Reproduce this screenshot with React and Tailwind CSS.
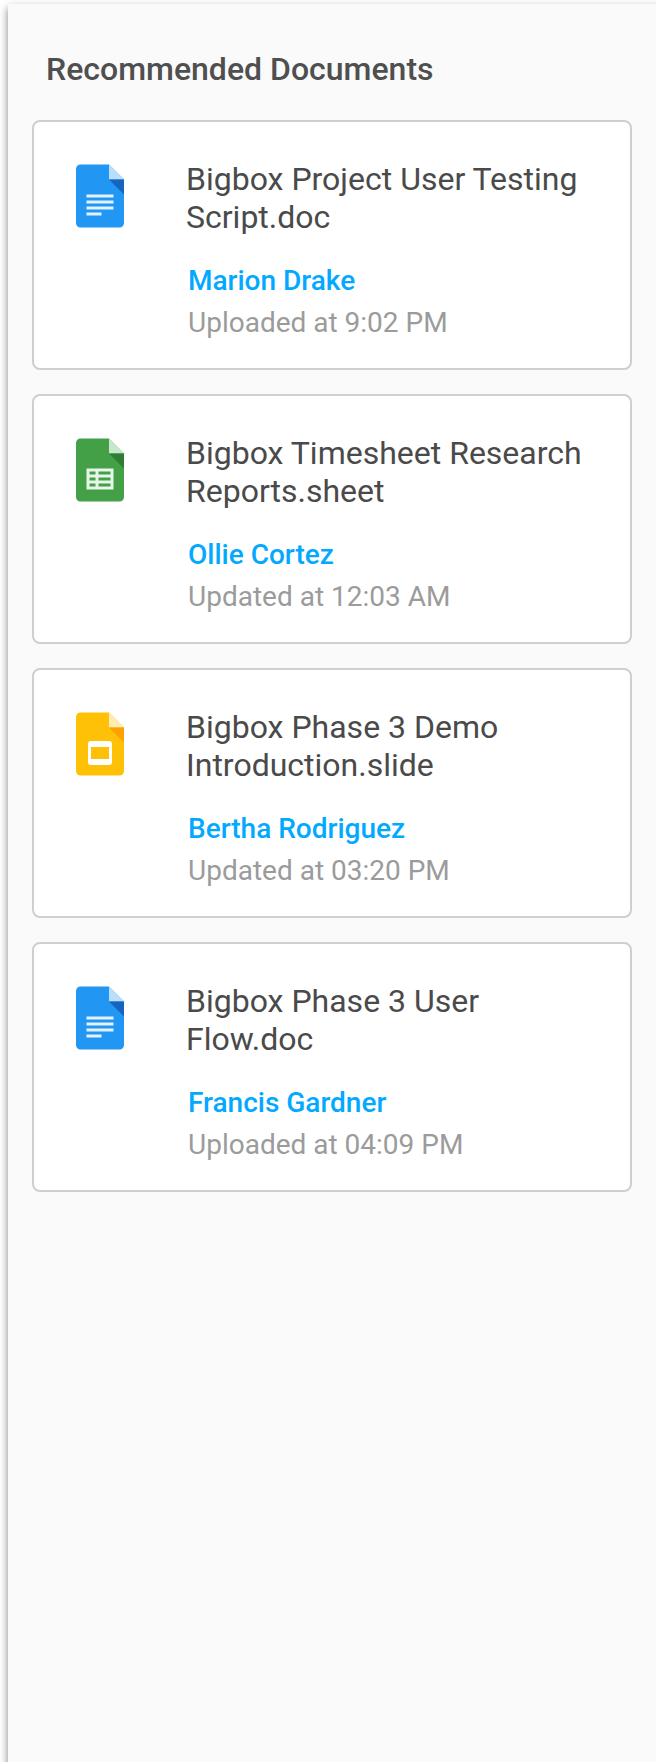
const PAGE = "M37 45H11c-1.657 0-3-1.343-3-3V6c0-1.657 1.343-3 3-3h19l10 10v29c0 1.657-1.343 3-3 3z";

const KINDS = {
  doc: { page: "#2196f3", fold: "#bbdefb", shade: "#1565c0" },
  sheet: { page: "#43a047", fold: "#c8e6c9", shade: "#2e7d32" },
  slide: { page: "#ffc107", fold: "#ffecb3", shade: "#ffa000" },
};

function FileIcon({ kind }) {
  const c = KINDS[kind];
  return (
    <svg viewBox="0 0 48 48" className="size-[72px] shrink-0" aria-hidden="true">
      <path fill={c.page} d={PAGE} />
      <path fill={c.fold} d="M40 13H30V3z" />
      <path fill={c.shade} d="M30 13l10 10V13z" />
      {kind === "doc" && (
        <path fill="#e3f2fd" d="M15 23h18v2H15zM15 27h18v2H15zM15 31h18v2H15zM15 35h10v2H15z" />
      )}
      {kind === "sheet" && (
        <path
          fill="#e8f5e9"
          fillRule="evenodd"
          d="M15 23h18v14H15zM17 25h4v2h-4zM17 29h4v2h-4zM17 33h4v2h-4zM23 25h8v2h-8zM23 29h8v2h-8zM23 33h8v2h-8z"
        />
      )}
      {kind === "slide" && (
        <path
          fill="#ffffff"
          fillRule="evenodd"
          d="M18 22h12a2 2 0 0 1 2 2v12a2 2 0 0 1-2 2H18a2 2 0 0 1-2-2V24a2 2 0 0 1 2-2zM18 26v8h12v-8z"
        />
      )}
    </svg>
  );
}

const DOCUMENTS = [
  { kind: "doc", title: "Bigbox Project User Testing Script.doc", author: "Marion Drake", time: "Uploaded at 9:02 PM" },
  { kind: "sheet", title: "Bigbox Timesheet Research Reports.sheet", author: "Ollie Cortez", time: "Updated at 12:03 AM" },
  { kind: "slide", title: "Bigbox Phase 3 Demo Introduction.slide", author: "Bertha Rodriguez", time: "Updated at 03:20 PM" },
  { kind: "doc", title: "Bigbox Phase 3 User Flow.doc", author: "Francis Gardner", time: "Uploaded at 04:09 PM" },
];

function DocumentCard({ kind, title, author, time }) {
  return (
    <li className="flex h-[250px] gap-[50px] rounded-lg border-2 border-[#cfcfcf] bg-white pt-[38px] pl-[30px]">
      <FileIcon kind={kind} />
      <div className="w-[410px]">
        <h2 className="text-[32px] leading-[38px] text-[#4a4a4a]">{title}</h2>
        <div className="mt-6 pl-0.5 text-[28px] leading-[42px]">
          <p className="font-medium text-[#03a9ff]">{author}</p>
          <p className="text-[#9b9b9b]">{time}</p>
        </div>
      </div>
    </li>
  );
}

export default function App() {
  return (
    <div className="h-[1762px] w-[656px] overflow-hidden bg-white pt-1 pl-2 font-['Roboto',sans-serif]">
      <aside className="h-[1770px] w-[660px] bg-[#fafafa] pt-[46px] pl-6 shadow-[0_4px_8px_rgba(0,0,0,0.5)]">
        <h1 className="pl-3.5 text-[32px] leading-[38px] font-medium text-[#4f4f4f]">Recommended Documents</h1>
        <ul className="mt-8 flex w-[600px] flex-col gap-6">
          {DOCUMENTS.map((d) => (
            <DocumentCard key={d.title} {...d} />
          ))}
        </ul>
      </aside>
    </div>
  );
}
